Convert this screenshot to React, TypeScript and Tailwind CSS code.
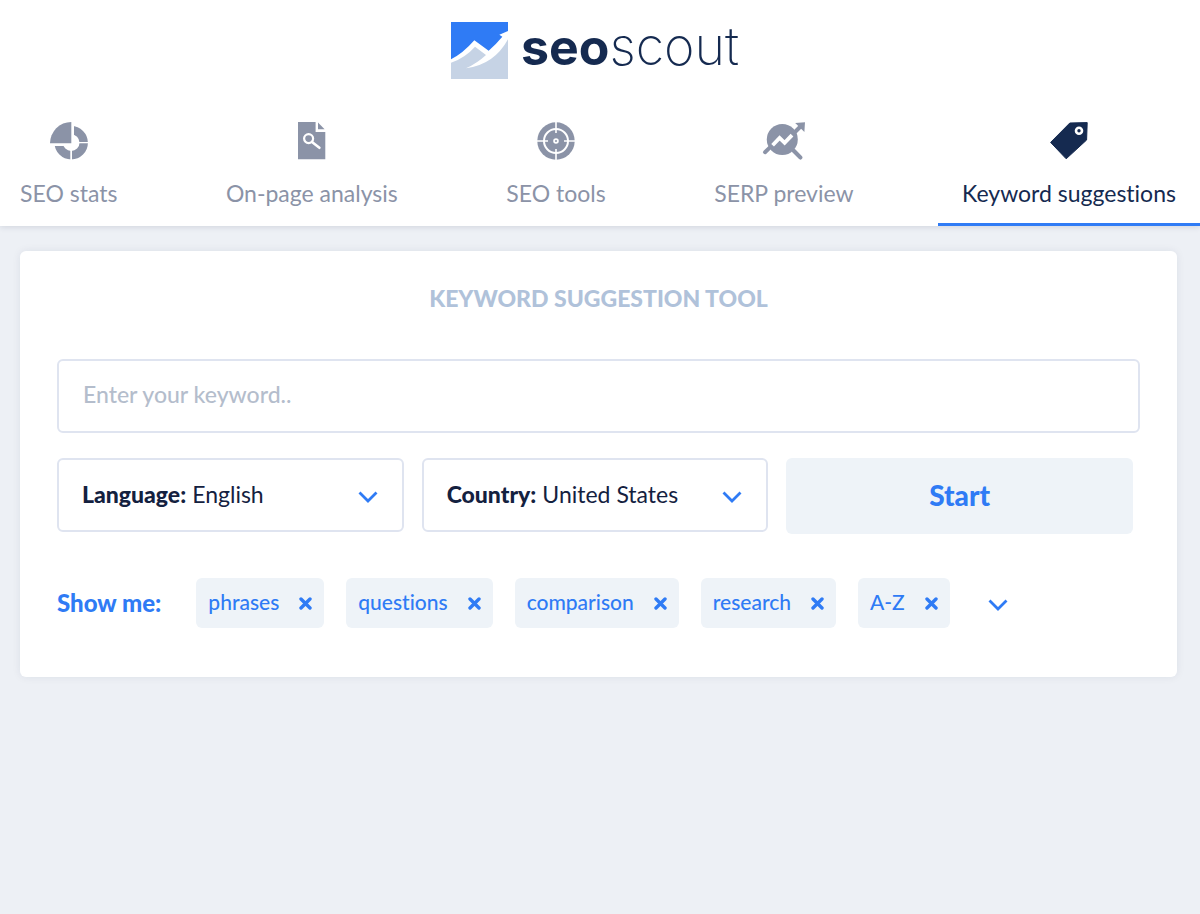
import React from "react";

type IconProps = { className?: string };

function StatsIcon() {
  return (
    <svg viewBox="0 0 38 38" className="h-[38px] w-[38px]" aria-hidden="true">
      <circle cx="21.2" cy="20.7" r="12.5" fill="none" stroke="currentColor" strokeWidth="8.4" />
      <path d="M0 0H22.6V3H24V20H38V21.3H22V38H20.3V24H0Z" fill="#fff" />
      <path d="M21.3 0V21.3H0A21.3 21.3 0 0 1 21.3 0Z" fill="currentColor" />
    </svg>
  );
}

function PageIcon() {
  return (
    <svg viewBox="0 0 28 38" className="h-[38px] w-[28px]" aria-hidden="true">
      <path d="M0 0H17.6V10H27.3V37.3H0Z" fill="currentColor" />
      <path d="M20 .6L26.6 7.2H20Z" fill="currentColor" />
      <circle cx="10.6" cy="16.6" r="4.5" fill="none" stroke="#fff" strokeWidth="2.2" />
      <path d="M14 20L21.4 25.8" stroke="#fff" strokeWidth="2.6" strokeLinecap="round" />
    </svg>
  );
}

function TargetIcon() {
  return (
    <svg viewBox="0 0 38 38" className="h-[38px] w-[38px]" aria-hidden="true">
      <circle cx="19" cy="19" r="18.7" fill="currentColor" />
      <g fill="none" stroke="#fff">
        <circle cx="19" cy="19" r="12" strokeWidth="2" />
        <path d="M19 0V11M19 27V38M0 19H11M27 19H38" strokeWidth="1.6" />
        <circle cx="19" cy="19" r="1.9" strokeWidth="1.8" />
      </g>
    </svg>
  );
}

function SerpIcon() {
  return (
    <svg viewBox="0 0 44 38" className="h-[38px] w-[44px]" aria-hidden="true">
      <g stroke="currentColor" strokeLinecap="round">
        <path d="M3 30.2L8 25.4" strokeWidth="4" />
        <path d="M32 29L38.3 35.4" strokeWidth="4.2" />
        <path d="M32 11L38 5" strokeWidth="4" />
      </g>
      <circle cx="20.3" cy="17.5" r="15.5" fill="currentColor" />
      <path d="M33.2.9L43 .2L42.4 10Z" fill="currentColor" />
      <path d="M10.6 23.2L17.6 16L22.6 20.8L30 13.2" fill="none" stroke="#fff" strokeWidth="3.8" />
    </svg>
  );
}

function TagIcon() {
  return (
    <svg viewBox="0 0 38 38" className="h-[38px] w-[38px]" aria-hidden="true">
      <path
        d="M.6 20.4L19.8 1L37.2 .6L36.6 18L16.2 36.8Z"
        fill="currentColor"
        stroke="currentColor"
        strokeLinejoin="round"
      />
      <circle cx="29" cy="8.7" r="3" fill="none" stroke="#fff" strokeWidth="2.6" />
    </svg>
  );
}

function Chevron({ className = "" }: IconProps) {
  return (
    <svg viewBox="0 0 20 12" className={`h-3 w-5 text-[#2f7bf5] ${className}`} aria-hidden="true">
      <path d="M1.5 1.5L10 10L18.5 1.5" fill="none" stroke="currentColor" strokeWidth="2.8" />
    </svg>
  );
}

function Cross() {
  return (
    <svg viewBox="0 0 13 13" className="h-[13px] w-[13px]" aria-hidden="true">
      <path d="M2 2L11 11M11 2L2 11" stroke="currentColor" strokeWidth="3.4" strokeLinecap="round" />
    </svg>
  );
}

function Logo() {
  return (
    <a href="#home" className="flex items-center gap-[13px] text-[#152a50]">
      <svg viewBox="0 0 171 171" className="h-[57px] w-[57px]" aria-hidden="true">
        <path d="M0 0H171V171H0Z" fill="#2f7bf5" />
        <path d="M0 112Q36 94 70 55L113 86Q134 68 154 44L145 38L171 27V171H0Z" fill="#fff" />
        <path d="M0 122Q42 108 72 74L105 99Q78 124 45 139Q130 128 171 52V171H0Z" fill="#c6d3e5" />
      </svg>
      <span className="flex items-baseline pb-2 font-['Inter',sans-serif] leading-[50px]">
        <span className="text-[50px] font-bold">seo</span>
        <span className="text-[52px] font-extralight">scout</span>
      </span>
    </a>
  );
}

const tabs = [
  { label: "SEO stats", href: "#stats", Icon: StatsIcon },
  { label: "On-page analysis", href: "#on-page", Icon: PageIcon },
  { label: "SEO tools", href: "#tools", Icon: TargetIcon },
  { label: "SERP preview", href: "#serp", Icon: SerpIcon },
  { label: "Keyword suggestions", href: "#keywords", Icon: TagIcon, active: true },
];

const filters = ["phrases", "questions", "comparison", "research", "A-Z"];

function SelectBox({ id, label, options }: { id: string; label: string; options: string[] }) {
  return (
    <div className="relative flex h-[74px] items-center rounded-md border-2 border-[#dfe4f0] bg-white pl-[23px] text-[#14213f]">
      <label htmlFor={id} className="pb-0.5 font-black">
        {label}:
      </label>
      <select
        id={id}
        className="h-full min-w-0 flex-1 appearance-none bg-transparent pb-0.5 pl-[6px] leading-8 outline-none"
      >
        {options.map((o) => (
          <option key={o}>{o}</option>
        ))}
      </select>
      <Chevron className="pointer-events-none absolute right-6 top-[31px]" />
    </div>
  );
}

export default function App() {
  return (
    <div className="min-h-screen bg-[#edf0f5] font-['Lato',sans-serif] text-[23px] leading-6 [font-variant-ligatures:no-common-ligatures]">
      <header className="bg-white pt-[22px] shadow-[0_1px_6px_rgba(30,40,80,0.14)]">
        <div className="flex h-[57px] items-center justify-center pr-2.5">
          <Logo />
        </div>
        <nav className="mt-[43px] flex justify-between">
          {tabs.map(({ label, href, Icon, active }) => (
            <a
              key={label}
              href={href}
              aria-current={active ? "page" : undefined}
              className={`flex flex-col items-center gap-[21px] whitespace-nowrap border-b-[3px] px-6 pb-[18px] first:pl-5 ${
                active ? "border-[#2f7bf5] text-[#152a50]" : "border-transparent text-[#8b93a7]"
              }`}
            >
              <Icon />
              <span>{label}</span>
            </a>
          ))}
        </nav>
      </header>

      <main className="ml-5 mr-[23px] mt-[25px] rounded-md bg-white px-[37px] pb-[49px] pt-[35px] shadow-[0_0_8px_rgba(30,40,80,0.08)]">
        <h1 className="text-center font-black uppercase text-[#b0c2da]">Keyword suggestion tool</h1>
        <form onSubmit={(e) => e.preventDefault()}>
          <input
            type="text"
            aria-label="Keyword"
            placeholder="Enter your keyword.."
            className="mt-[49px] block h-[74px] w-full rounded-md border-2 border-[#dfe4f0] bg-white px-6 pb-1 font-medium outline-none placeholder:text-[#b4bdcc]"
          />
          <div className="mr-[7px] mt-[25px] grid grid-cols-3 items-start gap-[18px]">
            <SelectBox id="language" label="Language" options={["English", "French", "German"]} />
            <SelectBox id="country" label="Country" options={["United States", "United Kingdom", "Canada"]} />
            <button
              type="submit"
              className="h-[76px] rounded-md bg-[#eef3f8] pb-0.5 text-[28px] font-black text-[#2f7bf5]"
            >
              Start
            </button>
          </div>
          <div className="mt-[44px] flex items-center text-[#2f7bf5]">
            <span className="mr-[35px] whitespace-nowrap text-[24px] font-black">Show me:</span>
            <div className="flex gap-[22px]">
              {filters.map((f) => (
                <button
                  key={f}
                  type="button"
                  aria-label={`Remove ${f}`}
                  className="flex h-[50px] items-center gap-5 rounded-md bg-[#eef3f8] px-3 text-[21px] font-medium"
                >
                  <span className="pb-0.5">{f}</span>
                  <Cross />
                </button>
              ))}
            </div>
            <button type="button" aria-label="More filters" className="ml-[38px] pt-1">
              <Chevron />
            </button>
          </div>
        </form>
      </main>
    </div>
  );
}
